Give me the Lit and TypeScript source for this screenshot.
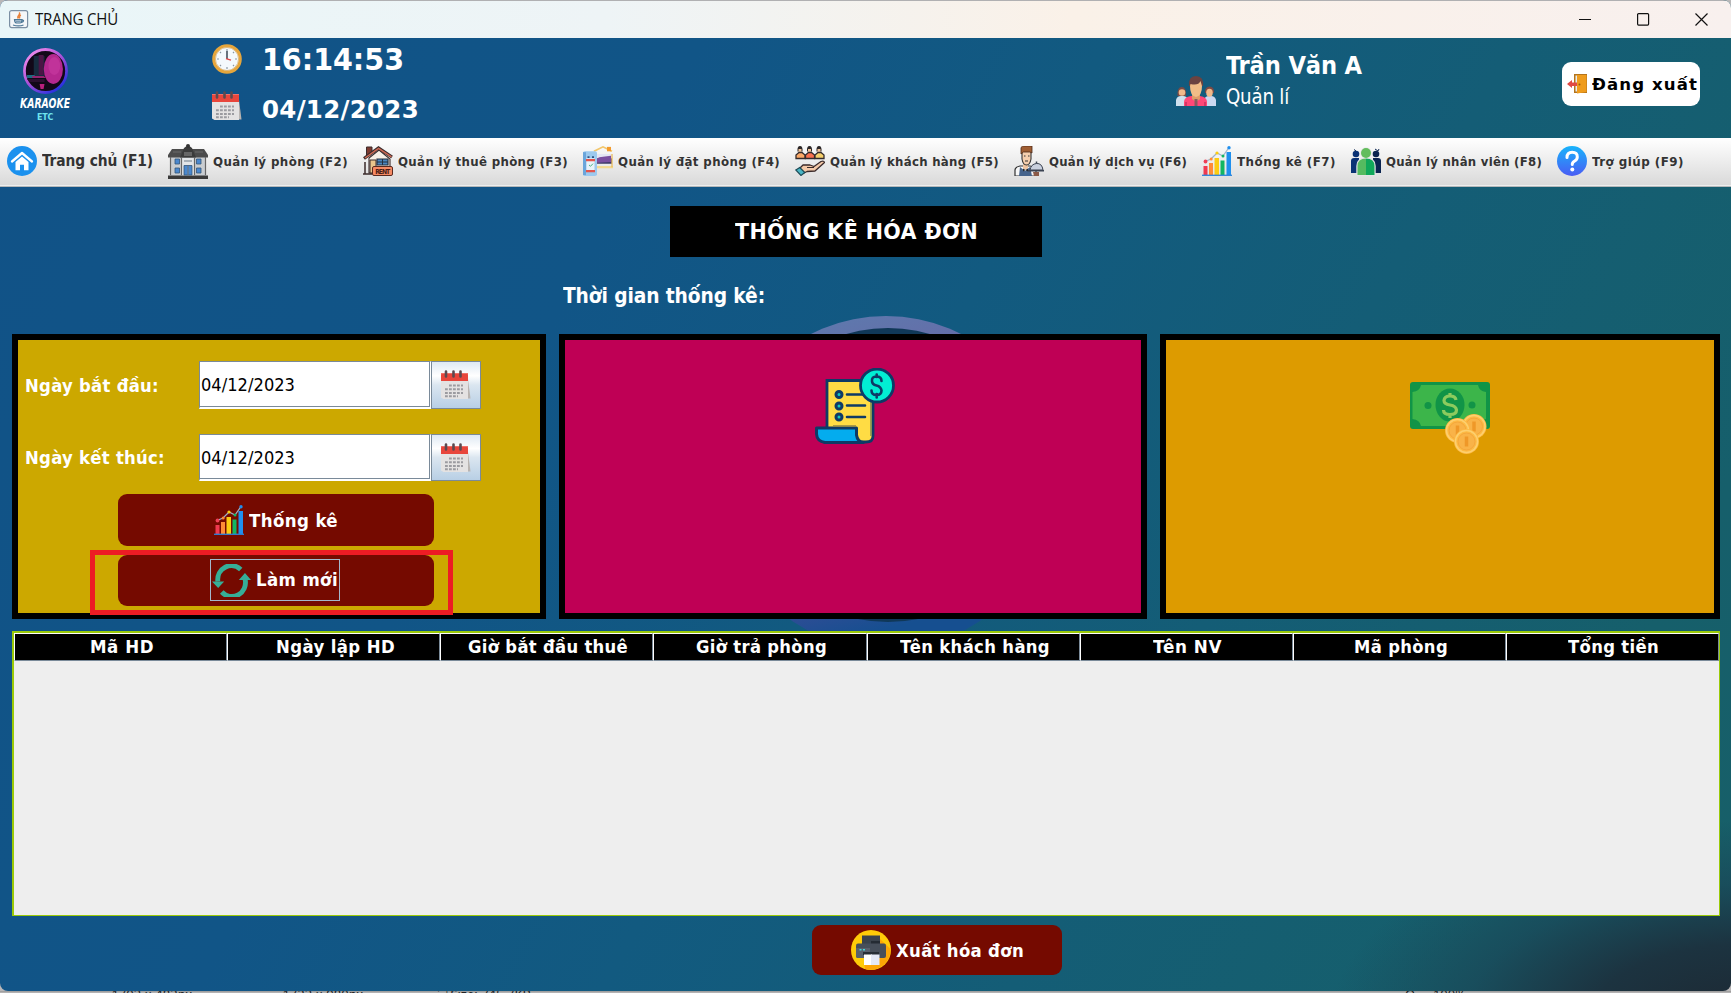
import { LitElement, html, css, svg, nothing } from "lit";
import { customElement, property, query } from "lit/decorators.js";

/**
 * One line of text fitted to a given width. The share `mix` of the missing width
 * is made up by widening the glyphs, the rest by letter spacing.
 */
@customElement("fit-text")
class FitText extends LitElement {
  static styles = css`
    :host { display: inline-block; white-space: nowrap; flex: none; }
    .t { display: inline-block; transform-origin: 0 50%; }
  `;
  @property() text = "";
  @property({ type: Number }) w = 0;
  @property({ type: Number }) mix = 0.6;
  @query(".t") span!: HTMLElement;
  render() {
    return html`<span class="t">${this.text}</span>`;
  }
  updated() {
    this.style.width = `${this.w}px`;
    this.span.style.transform = "none";
    this.span.style.letterSpacing = "0px";
    const natural = this.span.getBoundingClientRect().width;
    const scale = 1 + (this.w / natural - 1) * this.mix;
    this.span.style.letterSpacing = `${(this.w / scale - natural) / this.text.length}px`;
    this.span.style.transform = `scaleX(${scale})`;
  }
}

const art: Record<string, unknown> = {
  java: svg`<rect x=".6" y=".6" width="18" height="17" rx="2" fill="#f4f6f8" stroke="#7b8fa3" stroke-width="1.2"/>
    <path d="M10 2.5c2.5 2-3 3.2-.6 6M11.8 5c-2 1.3-1.6 2-.9 3.4" fill="none" stroke="#e8813a" stroke-width="1.5"/>
    <path d="M5.5 9.6h7.5c0 2-.6 3.4-2 3.4H8c-1.500 0-2.400-1.400-2.500-3.400zM13 10.300c2.200-.5 2 1.700-.4 2M4 15c3 1 8 1 10.500 0" fill="none" stroke="#4d7896" stroke-width="1.200"/>
    <path d="M6 10.500h6.500l-1.300 2H7.300z" fill="#7b9bb3"/>`,
  logo: svg`<defs><linearGradient id="ring" x1="0" y1="0" x2=".8" y2="1"><stop offset="0" stop-color="#ff9af0"/><stop offset=".5" stop-color="#b052d8"/><stop offset="1" stop-color="#1c2ee0"/></linearGradient></defs>
    <circle cx="24" cy="23" r="21.500" fill="#120818" stroke="url(#ring)" stroke-width="2.800"/>
    <path d="M12 8h11v22H12z" fill="#172b3e"/><path d="M17 7h5v20h-5z" fill="#4b1545"/>
    <ellipse cx="32" cy="21" rx="9.800" ry="15" fill="#b5288f"/><ellipse cx="33" cy="18" rx="6" ry="9" fill="#c93ba2" opacity=".6"/>
    <path d="M5 27h8v3H5z" fill="#1d6d80"/><path d="M10 28h12l3 2h-14z" fill="#96246f"/><path d="M18 36h5l-1 5h-3z" fill="#b8207d"/><path d="M5 31h18v3H8z" fill="#2b1030"/>`,
  clock: svg`<circle cx="15" cy="15" r="13.300" fill="#f4f9fc" stroke="#e6a63c" stroke-width="3"/>
    <circle cx="15" cy="15" r="11.500" fill="none" stroke="#c98b2c" stroke-width=".5"/>
    <g stroke="#8b99a5" stroke-width="1.200"><path d="M15 5v2M15 23v2M5 15h2M23 15h2M8 8l1 1M22 8l-1 1M8 22l1-1M22 22l-1-1"/></g>
    <path d="M15 15V7" stroke="#44505c" stroke-width="1.600"/><path d="M14 14.600l5 1.600" stroke="#e04545" stroke-width="1.300"/>`,
  calendar: svg`<path d="M27 9l2.500 19.500H6z" fill="#b9b4b1"/><path d="M0 9h27v20H2.500L0 27.500z" fill="#e4e2e2"/>
    <path d="M0 11V4.500Q0 3 1.500 3h24Q27 3 27 4.500V11z" fill="#e8463c"/><path d="M0 3.500h27" stroke="#f07068" stroke-width="1"/>
    <g stroke="#5b4a50" stroke-width="2.600" stroke-linecap="round"><path d="M5 1.500v5M12.500 1.500v5M19.500 1.500v5"/></g>
    <g stroke="#9b9ba0" stroke-width="2" stroke-dasharray="2.800 1.200"><path d="M8 15.500h14M4 19.300h18M4 23h18M4 26.300h13"/></g>`,
  user: svg`<path d="M0 30v-6q1-4 5-4h2q4 0 5 4v6z" fill="#cfe0ee"/><path d="M28 30v-6q1-4 5-4h2q4 0 5 4v6z" fill="#cbd8f0"/>
    <path d="M1.500 20q-.5-9 4.300-9t4.300 9z" fill="#7b4a45"/><circle cx="6" cy="16.500" r="3.300" fill="#f1b98a"/>
    <path d="M29 17q-.5-6.500 4.500-6.500T38 17z" fill="#7b4a45"/><ellipse cx="33.500" cy="16.800" rx="3.300" ry="4" fill="#f1b98a"/>
    <path d="M8 30v-4q0-5 7-6h9q7 1 7 6v4z" fill="#ff4778"/><path d="M10 30v-4M29 30v-4" stroke="#c9325f" stroke-width="1.500"/>
    <path d="M16 18h8v5l-4 3-4-3z" fill="#dd9c68"/><path d="M18.500 23h3v7h-3z" fill="#8a5860"/>
    <path d="M13 10q-1-10 7-10t7 10z" fill="#6b4341"/><path d="M14.500 8q8 2 10-3l1.500 5q0 10-6 11-6-1-6-11z" fill="#f1bd87"/>`,
  exit: svg`<path d="M7 0h13v19H7z" fill="#b5741b"/><path d="M8.500 1.500h3v16h-3z" fill="#e8edf0"/><path d="M10 1l9.500 0v17l-9.500 1.500z" fill="#ef9c1d"/><circle cx="12.500" cy="10.500" r="1" fill="#9a5a10"/>
    <path d="M0 10l5-4v2.500h5v3.500H5V14z" fill="#e04a44"/>`,
  home: svg`<circle cx="15" cy="15" r="15" fill="#1b91ee"/><path d="M5 15.500L15 7l10 8.500" fill="none" stroke="#fff" stroke-width="2.300" stroke-linejoin="round" stroke-linecap="round"/>
    <path d="M8.500 16L15 10.500 21.500 16v8.300H17v-5.600h-4v5.600H8.500z" fill="#fff"/>`,
  mansion: svg`<path d="M2 12h36v20H2z" fill="#c9cdd1"/><path d="M14 12h12v20H14z" fill="#e2e5e8"/>
    <path d="M0 13.500V11l4-6h32l4 6v2.500z" fill="#4c4c4c"/><path d="M12 13.500l4-9.500q4-4 8 0l4 9.500z" fill="#3b3b3b"/><path d="M16 8h8v4h-8z" fill="#666"/><path d="M5 8h8M27 8h8" stroke="#6a6a6a"/><circle cx="20" cy="2" r="2" fill="#333"/>
    <path d="M0 31.500h40V35H0z" fill="#3a3a3a"/><path d="M2.500 13v18M37.500 13v18M13.500 14v17M26.500 14v17" stroke="#666" stroke-width="1.200"/>
    <g fill="#4a88cf" stroke="#33557a" stroke-width=".8"><path d="M7 15h4.500v5H7zM28.500 15H33v5h-4.500zM7 24h4.500v5H7zM28.500 24H33v5h-4.500zM16 21.500h8V31h-8z"/></g>
    <path d="M16 17h8M20 22v9" stroke="#6b7a88" stroke-width="1.200"/>`,
  rent: svg`<path d="M6 12L16 4l11 9v14H6z" fill="#f6efe6" stroke="#3b2b2b" stroke-width="1.100"/><path d="M3.500 1h5.500v5l-5.500 4z" fill="#7d3a30" stroke="#3b2b2b"/>
    <path d="M1 12.500L15.500 2 29 11" fill="none" stroke="#3b2b2b" stroke-width="3.200"/><path d="M2 12L15.500 2.300 28.500 10.800" fill="none" stroke="#cf6a55" stroke-width="1.500"/>
    <path d="M7 14h6v13H7z" fill="#e9c68c" stroke="#3b2b2b"/><path d="M14 13h11v6H14z" fill="#4b87c0" stroke="#24303f" stroke-width="1.200"/><path d="M19.500 13v6M14 16h11" stroke="#24303f"/>
    <path d="M2 16v12M0 28h9" stroke="#3b2b2b" stroke-width="1.500"/><rect x="9.500" y="20.500" width="20" height="9" rx="1.500" fill="#f58a64" stroke="#5a2a20" stroke-width="1"/>
    <text x="19.700" y="27.600" text-anchor="middle" font-size="6.800" font-weight="bold" fill="#4a1e18" textLength="15">RENT</text>`,
  booking: svg`<path d="M11 6L20 1l9 5" fill="none" stroke="#f2c66b" stroke-width="1.800"/><path d="M24 1h4v5h-4z" fill="#f39b2d"/>
    <path d="M14 20h15v-6l-15 3z" fill="#3c3a66"/><path d="M14 14q6-4 14-4v8l-14 1z" fill="#7a4fa0"/><path d="M14 9h14v2l-14 2z" fill="#e4e6f4"/><path d="M13 24h17" stroke="#f3d98e" stroke-width="2.500"/><path d="M29 9v15" stroke="#e8bb60" stroke-width="1.300"/>
    <rect width="14" height="28" y="6" rx="2" fill="#9cc9ee"/><path d="M0 7h3v26H0z" fill="#6aa5db"/><path d="M3.500 14h8v15h-8z" fill="#e9f3fa"/><path d="M3 16h9M3 28.500h9" stroke="#e3554d" stroke-width="2.400"/><path d="M4.500 11.500h2v2h-2zM9 11.500h2v2H9z" fill="#2c5687"/><path d="M6 21.500l1.500 1.500L10 20" stroke="#3fae7a" fill="none"/>`,
  customers: svg`${[2, 11.5, 21].map((x, i) => svg`<path d="M${x + 0.5} 5.500q-.5-5.500 2.500-5.500t2.500 5.500z" fill="#2c2727"/><path d="M${x + 1.500} 3h3V7.500h-3z" fill="#efc39c"/>
      <path d="M${x - 1} 12.500V9l3-2.500h3l3 2.500V12.500z" fill="${["#fba968", "#f8714f", "#f5cf6b"][i]}" stroke="#332b2b" stroke-width="1.300"/>`)}
    <path d="M4 23l4-4h7l4 1.500 7-5q3-1 3.500 1L20 25l-8 .5-4 2z" fill="#f4c9a8" stroke="#3a2a2a" stroke-width="1.300" stroke-linejoin="round"/><path d="M12 21.500h7" stroke="#3a2a2a"/>
    <path d="M.8 24l4-2.500 5 5L6 29.500z" fill="#49b5c4" stroke="#1d4b57" stroke-width="1.200"/>`,
  waiter: svg`<path d="M1 30v-6q0-3 5-4h10q5 1 6 4v6z" fill="#f6f6f6" stroke="#333" stroke-width="1.200"/><path d="M6 21l5 4 5-4 2 9H5z" fill="#46648c"/>
    <path d="M9 16h5v6l-2.500 2L9 22z" fill="#efc4a0"/><path d="M8 4h9v9q-1 6-4.500 6T8 13z" fill="#f6cfae" stroke="#333" stroke-width="1.100"/><path d="M7 8V1.500Q8 0 10 0h8v7l-2-1H9.500z" fill="#a05e33" stroke="#4b2a18" stroke-width=".8"/>
    <path d="M10 10h1.500M14 10h1.500M11 15h3" stroke="#333"/><path d="M9 22.500l2.500 1.500 2.500-1.500v3L11.500 24 9 25.500z" fill="#2a2a2a"/>
    <path d="M16 24q1-6 6.500-6.500T29 24z" fill="#c9d0de" stroke="#3b4352" stroke-width="1"/><path d="M22.500 15.500v2M14 24.800h16" stroke="#3b4352" stroke-width="1.500"/><path d="M19 26h6v4h-5z" fill="#8b5a48"/>`,
  chart: svg`<g><path d="M1.500 20h4v9h-4z" fill="#f0394f"/><path d="M7 17h4v12H7z" fill="#ff8b36"/><path d="M12.500 12H17v17h-4.500z" fill="#fccc10"/><path d="M18.500 14.500h4V29h-4z" fill="#12b663"/><path d="M24.500 6H29v23h-4.500z" fill="#1f8fee"/></g>
    <path d="M3 15.500l6-2.500 6-6 6 3 6-8.500" fill="none" stroke="#9fb2c8" stroke-width="1.200"/>
    <circle cx="3.500" cy="15.500" r="1.900" fill="#ee4056"/><circle cx="9.200" cy="13" r="1.500" fill="#ff8b36"/><circle cx="15" cy="7" r="1.600" fill="#fccc10"/><circle cx="21" cy="10" r="1.500" fill="#12b663"/><circle cx="27" cy="1.800" r="1.700" fill="#1f8fee"/>
    <path d="M0 29.300h30" stroke="#2b82d9" stroke-width="1.300"/>`,
  staff: svg`<g fill="#0a3275"><circle cx="5" cy="8" r="3.300"/><path d="M0 27V15q0-3 3-3h5v15z"/></g><g fill="#0a2450"><circle cx="25" cy="8" r="3.300"/><path d="M30 27V15q0-3-3-3h-5v15z"/></g><path d="M24 3l3 2 1-2M3 3.500l2 1.500" stroke="#0a2450" fill="none"/>
    <circle cx="15" cy="7" r="5.800" fill="#e9e9e9"/><path d="M5.300 30V20q0-8.500 9.700-8.500t9.700 8.500v10z" fill="#e4e4e4"/>
    <circle cx="15" cy="7" r="5" fill="#63bd5d"/><path d="M6.500 29V20q0-7.500 8.500-7.500V29z" fill="#55bb60"/><path d="M23.500 29V20q0-7.500-8.500-7.500V29z" fill="#10a85a"/>`,
  help: svg`<defs><linearGradient id="hg" x1="0" y1="0" x2="0" y2="1"><stop offset="0" stop-color="#18b4fb"/><stop offset="1" stop-color="#4a5cf4"/></linearGradient></defs>
    <circle cx="15" cy="15" r="15" fill="url(#hg)"/><path d="M10 11.500Q10 6.300 15.200 6.300T20.300 11q0 2.500-2.600 4T15.300 18.500" fill="none" stroke="#fff" stroke-width="3" stroke-linecap="round"/><circle cx="15.300" cy="23.500" r="2" fill="#fff"/>`,
  refresh: svg`<g fill="none" stroke="#36ae97" stroke-width="5"><path d="M6 17.500A14 14 0 0 1 29.500 5.500"/><path d="M34 15.500A14 14 0 0 1 10 28"/></g>
    <path d="M0 17.500h12.500l-6.200 6.500zM27.500 16H40l-6.200-7z" fill="#36ae97"/>`,
  printer: svg`<circle cx="20" cy="20" r="20" fill="#ffcb08"/><path d="M29 9L39.500 19A20 20 0 0 1 14 39l-1-8z" fill="#fda606"/>
    <path d="M11 5.500h18V15H11z" fill="#3b434c"/><path d="M20 11h9v6h-9z" fill="#242b33"/><rect x="5" y="13.500" width="30" height="14.500" rx="2" fill="#474f5a"/><path d="M5 18h14v10H7q-2 0-2-2z" fill="#59616e"/>
    <path d="M12 22h16v3H12z" fill="#272e36"/><path d="M8.500 19h2v1.500h-2zM12 19h2v1.500h-2z" fill="#49d6da"/><path d="M13 24.500h8V35h-8z" fill="#fff"/><path d="M20 24.500h8.500V35H20z" fill="#e4e9f6"/>`,
  invoice: svg`<path d="M12 60V12.500h46V68q0 6-7 6H10z" fill="#ffdc44" stroke="#0e3a66" stroke-width="2.800"/><path d="M56 34v34" stroke="#7c8a55" stroke-width="1.500"/>
    <path d="M1.500 60h40v7q1 7 7 7.500H10q-8-1-8.500-8.500z" fill="#04acee" stroke="#0e3a66" stroke-width="3" stroke-linejoin="round"/><path d="M18 58h23" stroke="#8e8547" stroke-width="1.500"/>
    <g fill="#10c9c0" stroke="#0e3a66" stroke-width="3"><circle cx="24" cy="26.500" r="3"/><circle cx="24" cy="38" r="3"/><circle cx="24" cy="49" r="3"/></g>
    <path d="M32 26.500h16M32 37.500h18M32 49h18" stroke="#0e3a66" stroke-width="2.600" stroke-linecap="round"/>
    <circle cx="62" cy="17.500" r="16.500" fill="#02eed3" stroke="#0e3a66" stroke-width="2.800"/>
    <path d="M66.500 13q0-4.500-5-4.500T57 13q0 3.500 4.500 4.500t5 5q0 4.500-5 4.500t-5-4.500M61.700 6.500v2.500M61.700 26v3.500" fill="none" stroke="#0e3a66" stroke-width="2.600" stroke-linecap="round"/>`,
  money: svg`<rect y="2" width="80" height="47" rx="3" fill="#119447"/><path d="M11 5h57q1 6 8 7v27q-7 1-8 7H11q-1-6-8.500-7V12Q10 11 11 5z" fill="#3cb54a"/>
    <ellipse cx="40" cy="25" rx="14.500" ry="16.500" fill="#119447"/><circle cx="18" cy="25.500" r="3.500" fill="#119447"/><circle cx="62" cy="25" r="3.500" fill="#119447"/>
    <path d="M46 20q-.5-4-6-4t-6 4.500q0 3.500 6 4.500t6.500 5q0 4.500-6.500 4.500T33.500 30M40 13v3M40 34v4" fill="none" stroke="#8ccb5e" stroke-width="3.200"/>
    ${[[64, 46.500], [47.500, 50.500], [56.500, 61.500]].map(([x, y]) => svg`<circle cx="${x}" cy="${y}" r="12.500" fill="#fdba44"/><circle cx="${x}" cy="${y}" r="11" fill="none" stroke="#fdd070" stroke-width="1.500"/><circle cx="${x}" cy="${y}" r="8.500" fill="#f9b348" stroke="#f3a238" stroke-width=".8"/><path d="M${x} ${y - 5}v10" stroke="#ef9828" stroke-width="3.500"/>`)}`,
};

const icon = (name: string, w: number, h: number, vw = w, vh = h) =>
  html`<svg class="ico" width=${w} height=${h} viewBox="0 0 ${vw} ${vh}" preserveAspectRatio="none">${art[name] ?? nothing}</svg>`;

const menu: [string, string, number][] = [
  ["home", "Trang chủ (F1)", 111],
  ["mansion", "Quản lý phòng (F2)", 135],
  ["rent", "Quản lý thuê phòng (F3)", 170],
  ["booking", "Quản lý đặt phòng (F4)", 162],
  ["customers", "Quản lý khách hàng (F5)", 169],
  ["waiter", "Quản lý dịch vụ (F6)", 138],
  ["chart", "Thống kê (F7)", 99],
  ["staff", "Quản lý nhân viên (F8)", 156],
  ["help", "Trợ giúp (F9)", 92],
];

const columns: [string, number][] = [
  ["Mã HD", 64], ["Ngày lập HD", 119], ["Giờ bắt đầu thuê", 160], ["Giờ trả phòng", 131],
  ["Tên khách hàng", 150], ["Tên NV", 69], ["Mã phòng", 94], ["Tổng tiền", 91],
];

@customElement("app-root")
class AppRoot extends LitElement {
  static styles = css`
    :host { display: block; width: 1731px; height: 993px; overflow: hidden; background: #b9b7b8;
      font-family: "DejaVu Sans Condensed", "DejaVu Sans", sans-serif; font-stretch: condensed; }
    * { box-sizing: border-box; }
    .ico { display: block; flex: none; }
    .window { position: relative; z-index: 0; height: 991px; border-radius: 8px; overflow: hidden; display: flex; flex-direction: column;
      background: radial-gradient(ellipse 420px 200px at 1750px 1020px, #1d2832 0%, #1c3340 38%, #1a4354a0 68%, #165f6b00 100%),
        linear-gradient(118deg, #115287 0%, #115587 32%, #125a80 50%, #145d76 68%, #165f6b 88%, #175f68 100%); }
    .ring { position: absolute; z-index: -1; left: 716px; top: 314px; }
    .titlebar { height: 38px; flex: none; display: flex; align-items: center; padding: 0 23px 0 9px; border-top: 1px solid #b0b0b2; color: #111;
      background: linear-gradient(90deg, #e9f6f8, #eef4f6 35%, #faf1e8 62%, #f8f0ee); font: 15.500px "Open Sans", "Noto Sans", sans-serif; }
    .titlebar fit-text { margin: -1px auto 0 6px; }
    .header { height: 100px; flex: none; display: flex; align-items: flex-start; padding: 0 31px 0 20px; color: #fff; }
    .brand { width: 50px; padding-top: 10px; display: flex; flex-direction: column; align-items: center; }
    .brand .name { font: italic bold 13.500px/14px "DejaVu Sans Condensed", sans-serif; margin-top: 2px; }
    .brand .sub { font-size: 9.500px; font-weight: bold; line-height: 10px; margin-top: 2px; color: #6fe3ee; }
    .times { margin: 6px auto 0 142px; display: flex; flex-direction: column; gap: 17px; font-weight: bold; }
    .stamp { display: flex; gap: 20px; align-items: center; height: 30px; }
    .stamp .time { font-size: 30px; line-height: 32px; padding-top: 2px; }
    .stamp .date { font-size: 25px; line-height: 30px; padding-top: 8px; }
    .user { display: flex; gap: 10px; margin-right: 200px; }
    .user .ico { margin-top: 38px; }
    .who { display: flex; flex-direction: column; padding-top: 12px; gap: 2px; }
    .who .full { font-size: 25.500px; font-weight: bold; line-height: 31px; }
    .who .role { font-size: 21px; line-height: 29px; }
    .logout { width: 138px; height: 44px; margin-top: 24px; border-radius: 9px; background: #fff; color: #000; display: flex; align-items: center; gap: 5px; padding-left: 5px; font-size: 16.500px; font-weight: bold; }
    .logout .ico { margin-top: -1px; }
    .logout fit-text { padding-top: 1px; }
    .menu { height: 49px; flex: none; display: flex; align-items: center; gap: 15px; padding: 0 0 3px 7px; color: #333;
      background: linear-gradient(#fff, #dadada 95%, #eee 96%, #eee 98%, #b4b8ba 98%); font-weight: bold; font-size: 12.800px; }
    .entry { display: flex; align-items: center; gap: 5px; }
    .entry.first { font-size: 15.700px; }
    .entry.first fit-text { margin-top: -1px; }
    .heading { margin: 19px 0 0 670px; width: 372px; height: 51px; flex: none; background: #000; color: #fff; display: flex; align-items: center; justify-content: center; font-size: 22px; font-weight: bold; }
    .period { margin: 24px 0 0 563px; height: 30px; flex: none; line-height: 30px; color: #fff; font-size: 21px; font-weight: bold; }
    .panels { margin: 23px 11px 0 12px; height: 285px; flex: none; display: grid; grid-template-columns: 534px 588px 560px; gap: 13px; }
    .panel { border: 6px solid #000; position: relative; }
    .filter { background: #cca800; padding: 21px 0 0 7px; color: #fff; font-weight: bold; font-size: 17.500px; }
    .field { display: flex; align-items: center; height: 48px; }
    .field + .field { margin-top: 25px; height: 47px; }
    .label { width: 174px; padding-top: 2px; }
    .field + .field .label { padding-top: 0; }
    .input { width: 232px; height: 100%; border: 1px solid #7a8a99; border-right-color: #fff; border-bottom: 2px solid #fff; background: #fff; box-shadow: inset -1px -1px #7a8a99; color: #000; font-weight: normal; font-size: 18px; display: flex; align-items: center; padding-left: 1px; }
    .pick { width: 50px; height: 100%; border: 1px solid #7a8a99; background: linear-gradient(#dfe9f3, #fff 30%, #dbe6f0 50%, #b8cfe5); display: grid; place-items: center; }
    .action { display: flex; align-items: center; justify-content: center; gap: 5px; background: #750a00; border-radius: 9px; color: #fff; font-weight: bold; font-size: 17.500px; }
    .stats { width: 316px; height: 52px; margin: 13px 0 0 92.500px; }
    .stats fit-text { padding-top: 2px; }
    .reset { width: 316px; height: 51px; margin: 9px 0 0 92.500px; padding-right: 2px; }
    .focus { display: flex; align-items: center; gap: 5px; width: 130px; height: 42px; border: 1px solid #a3b8cc; padding-left: 1px; margin-top: -1px; }
    .marker { position: absolute; left: 72px; top: 210px; width: 363px; height: 65px; border: 5px solid #ed1c24; }
    .count { background: #bf0055; padding: 28px 0 0 250px; }
    .total { background: #dd9b00; padding: 40px 0 0 244px; }
    .table { margin: 12px 11px 0 12px; height: 285px; flex: none; background: #eee; border: solid #9aca08; border-width: 2px 1px 1px 2px; }
    .head { display: grid; grid-template-columns: repeat(8, 1fr); background: #000; color: #fff; font-weight: bold; font-size: 17.300px; height: 28px; }
    .cell { border: 1px solid #fff; border-right-color: #7a8a99; border-bottom-color: #7a8a99; display: flex; align-items: center; justify-content: center; padding: 0 0 1px 3px; }
    .export { width: 250px; height: 50px; flex: none; margin: 9px 0 0 812px; padding-left: 1px; }
    .export fit-text { padding-top: 1px; }
    .behind { height: 2px; overflow: hidden; display: flex; padding-left: 96px; color: #222; background: linear-gradient(#979797, #bdbbbc); font: 13px/13px "Noto Sans", sans-serif; }
    .behind span { margin-top: -3px; height: 14px; }
    .behind .a { width: 171px; } .behind .b { width: 171px; } .behind .c { width: 967px; }
  `;
  render() {
    return html`
      <div class="window">
        <svg class="ring" width="344" height="340" viewBox="0 0 344 340">
          <defs><linearGradient id="rg" x1="0" y1="0" x2=".25" y2="1"><stop offset="0" stop-color="#5a7fb0"/><stop offset=".3" stop-color="#6868a6"/><stop offset=".8" stop-color="#454b9a"/><stop offset="1" stop-color="#164f90"/></linearGradient></defs>
          <circle cx="170" cy="169" r="167" fill="url(#rg)"/><circle cx="172" cy="161" r="147" fill="#103858"/>
        </svg>
        <div class="titlebar">
          ${icon("java", 20, 19)}<fit-text text="TRANG CHỦ" w="83"></fit-text>
          <svg class="ico" width="130" height="14" viewBox="0 0 130 14" fill="none" stroke="#111" stroke-width="1.200">
            <path d="M1 6.500h12"/><rect x="59.600" y=".6" width="11" height="11.500" rx="1"/><path d="M117.500 .5l12 12M129.500 .5l-12 12"/>
          </svg>
        </div>
        <div class="header">
          <div class="brand">
            ${icon("logo", 47, 46, 48, 46)}
            <fit-text class="name" text="KARAOKE" w="50" mix="1"></fit-text>
            <fit-text class="sub" text="ETC" w="16"></fit-text>
          </div>
          <div class="times">
            <div class="stamp">${icon("clock", 30, 30)}<fit-text class="time" text="16:14:53" w="142" mix="1"></fit-text></div>
            <div class="stamp">${icon("calendar", 30, 30)}<fit-text class="date" text="04/12/2023" w="157" mix="0.8"></fit-text></div>
          </div>
          <div class="user">
            ${icon("user", 40, 30)}
            <div class="who">
              <fit-text class="full" text="Trần Văn A" w="136"></fit-text>
              <fit-text class="role" text="Quản lí" w="63"></fit-text>
            </div>
          </div>
          <div class="logout">${icon("exit", 20, 20)}<fit-text text="Đăng xuất" w="106" mix="0.5"></fit-text></div>
        </div>
        <div class="menu">
          ${menu.map(([name, text, w], i) => html`<div class="entry ${i === 0 ? "first" : ""}">
            ${name === "mansion" ? icon(name, 40, 35) : name === "booking" ? icon(name, 30, 30, 30, 34) : icon(name, 30, 30)}
            <fit-text .text=${text} .w=${w} .mix=${i === 0 ? 0.6 : 0.3}></fit-text></div>`)}
        </div>
        <div class="heading"><fit-text text="THỐNG KÊ HÓA ĐƠN" w="243"></fit-text></div>
        <div class="period"><fit-text text="Thời gian thống kê:" w="202"></fit-text></div>
        <div class="panels">
          <div class="panel filter">
            ${([["Ngày bắt đầu:", 134], ["Ngày kết thúc:", 140]] as [string, number][]).map(([text, w]) => html`
              <div class="field">
                <div class="label"><fit-text .text=${text} .w=${w}></fit-text></div>
                <div class="input"><fit-text text="04/12/2023" w="94"></fit-text></div>
                <div class="pick">${icon("calendar", 30, 30)}</div>
              </div>`)}
            <div class="action stats">${icon("chart", 30, 30)}<fit-text text="Thống kê" w="89"></fit-text></div>
            <div class="action reset"><div class="focus">${icon("refresh", 39, 33, 40, 33)}<fit-text text="Làm mới" w="82"></fit-text></div></div>
            <div class="marker"></div>
          </div>
          <div class="panel count">${icon("invoice", 80, 77)}</div>
          <div class="panel total">${icon("money", 80, 75)}</div>
        </div>
        <div class="table">
          <div class="head">${columns.map(([text, w]) => html`<div class="cell"><fit-text .text=${text} .w=${w}></fit-text></div>`)}</div>
        </div>
        <div class="action export">${icon("printer", 40, 40)}<fit-text text="Xuất hóa đơn" w="128"></fit-text></div>
      </div>
      <div class="behind"><span class="a">▭ 1703 × 483px</span><span class="b">▭ 1723 × 980px</span><span class="c">⛶ Size: 745.7KB</span><span>Q ⌄ 100%</span></div>
    `;
  }
}
